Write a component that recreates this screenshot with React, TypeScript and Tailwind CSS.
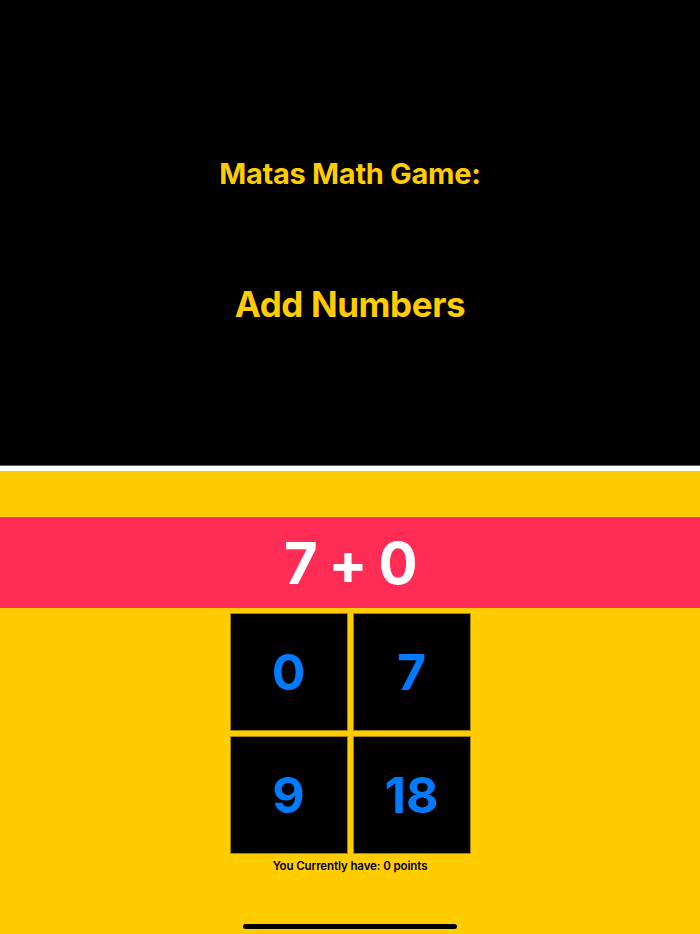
import React from "react";

const answers = [0, 7, 9, 18];

export default function App() {
  return (
    <div
      className="w-[700px] h-[934px] flex flex-col bg-[#ffcc00] overflow-hidden"
      style={{ fontFamily: "Inter, 'Noto Sans', sans-serif" }}
    >
      <div className="h-[465px] bg-black flex flex-col items-center pt-[157px]">
        <h1 className="text-[29px] leading-[34px] font-bold text-[#ffcc00] tracking-[-0.3px]">
          Matas Math Game:
        </h1>
        <h2 className="mt-[92px] text-[35px] leading-[42px] font-bold text-[#ffcc00] tracking-[-0.4px]">
          Add Numbers
        </h2>
      </div>
      <div className="h-[1px] bg-[#5c5c5c]" />
      <div className="h-[5px] bg-white" />

      <div className="h-[46px]" />
      <div className="h-[91px] bg-[#ff2d55] flex items-center justify-center">
        <span className="text-[58px] leading-none font-bold text-white tracking-[-1.5px]">7 + 0</span>
      </div>

      <div className="flex flex-col items-center pt-[5px]">
        <div className="grid grid-cols-[118px_118px] gap-[5px]">
          {answers.map((n) => (
            <button
              key={n}
              className="w-[118px] h-[118px] bg-black border border-[#a58400] flex items-center justify-center"
            >
              <span className="text-[50px] leading-none font-bold text-[#007aff]">{n}</span>
            </button>
          ))}
        </div>
        <p className="mt-[4px] text-[11.5px] leading-[16px] font-semibold text-black tracking-[-0.1px]">
          You Currently have: 0 points
        </p>
        <div className="mt-[50px] w-[214px] h-[5px] rounded-full bg-black" />
      </div>
    </div>
  );
}
